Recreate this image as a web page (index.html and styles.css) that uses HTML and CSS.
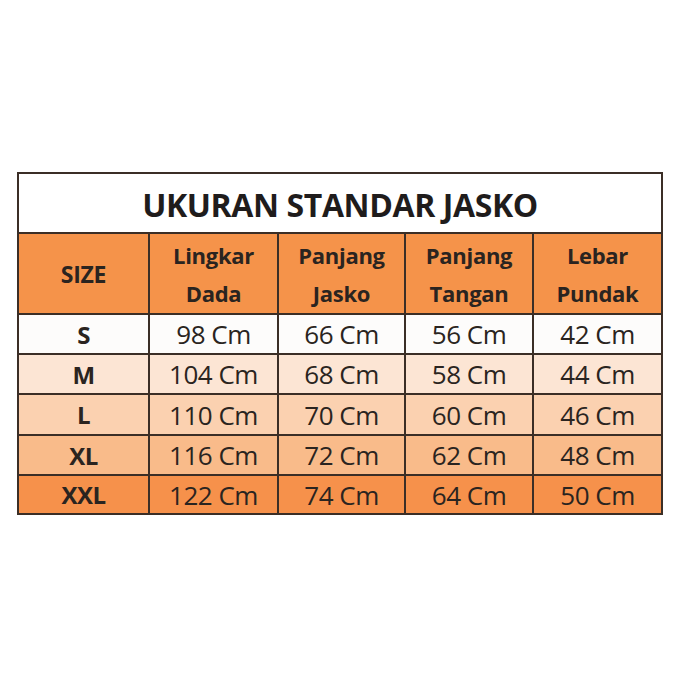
FILE: index.html
```html
<!DOCTYPE html>
<html>
<head>
<meta charset="utf-8">
<link rel="stylesheet" href="styles.css">
</head>
<body>
<div class="page">
  <div class="chart">
    <div class="title">UKURAN STANDAR JASKO</div>
    <div class="cell head size">SIZE</div>
    <div class="cell head">Lingkar<br>Dada</div>
    <div class="cell head">Panjang<br>Jasko</div>
    <div class="cell head">Panjang<br>Tangan</div>
    <div class="cell head">Lebar<br>Pundak</div>

    <div class="cell r1 lbl">S</div>
    <div class="cell r1">98 Cm</div>
    <div class="cell r1">66 Cm</div>
    <div class="cell r1">56 Cm</div>
    <div class="cell r1">42 Cm</div>

    <div class="cell r2 lbl">M</div>
    <div class="cell r2">104 Cm</div>
    <div class="cell r2">68 Cm</div>
    <div class="cell r2">58 Cm</div>
    <div class="cell r2">44 Cm</div>

    <div class="cell r3 lbl">L</div>
    <div class="cell r3">110 Cm</div>
    <div class="cell r3">70 Cm</div>
    <div class="cell r3">60 Cm</div>
    <div class="cell r3">46 Cm</div>

    <div class="cell r4 lbl">XL</div>
    <div class="cell r4">116 Cm</div>
    <div class="cell r4">72 Cm</div>
    <div class="cell r4">62 Cm</div>
    <div class="cell r4">48 Cm</div>

    <div class="cell r5 lbl">XXL</div>
    <div class="cell r5">122 Cm</div>
    <div class="cell r5">74 Cm</div>
    <div class="cell r5">64 Cm</div>
    <div class="cell r5">50 Cm</div>
  </div>
</div>
</body>
</html>
```

FILE: styles.css
```css
html, body {
  margin: 0;
  padding: 0;
  background: #ffffff;
}

.page {
  width: 678px;
  height: 678px;
  padding: 172px 0 0 17px;
  box-sizing: border-box;
  font-family: "Open Sans", "Liberation Sans", sans-serif;
  color: #2a2420;
}

.chart {
  display: grid;
  grid-template-columns: 129px 127px 125px 126px 127px;
  grid-template-rows: 58px 79px 38px 38px 39px 38px 37px;
  gap: 2px;
  padding: 2px;
  background: #3b2e26;
  width: max-content;
}

.title {
  grid-column: 1 / -1;
  background: #ffffff;
  display: flex;
  align-items: center;
  justify-content: center;
  font-weight: 700;
  font-size: 32px;
  letter-spacing: -0.4px;
  padding-top: 2px;
  color: #1f1c1c;
}

.cell {
  display: flex;
  align-items: center;
  justify-content: center;
  text-align: center;
  font-size: 26px;
  letter-spacing: -0.5px;
}

.head {
  background: #f5934a;
  font-weight: 700;
  font-size: 22px;
  line-height: 38px;
  letter-spacing: -0.3px;
}

.size {
  font-size: 23px;
}

.lbl {
  font-weight: 700;
  font-size: 24px;
  letter-spacing: -0.5px;
}

.r1 { background: #fdfcfb; }
.r2 { background: #fce5d4; }
.r3 { background: #fbd1b0; }
.r4 { background: #f9bb8a; }
.r5 { background: #f6914b; }
```
